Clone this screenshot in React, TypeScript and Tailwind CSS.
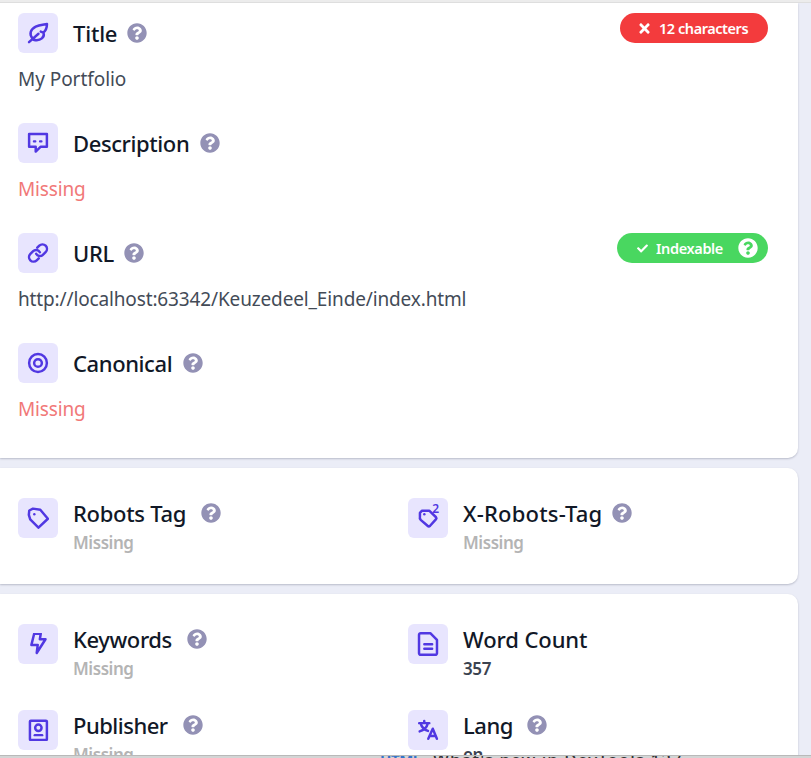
import type { ReactNode } from "react";
import { FaQuestionCircle, FaTimes, FaCheck } from "react-icons/fa";

const paths: Record<string, ReactNode> = {
  leaf: (
    <>
      <path d="M2.200 22 12.500 12.800M6 18C2 13 3.800 8 9.500 5 13 3.300 17.500 3 21.800 2.200 21.800 6 20.500 9.500 17.800 11.500L15 10.500M17.800 11.500C20 16 15 21.500 7 19.300" />
    </>
  ),
  chat: (
    <>
      <path d="M2.300 2.300h19.400v13.700H15l-5.500 5.300v-5.300H2.300z" />
      <path d="M7.500 10.300h1.600M14.200 10.300h1.600" strokeWidth="2.400" />
    </>
  ),
  link: (
    <>
      <path d="M10 12.800a4.600 4.600 0 0 0 7.300 1.200l3-3a4.900 4.900 0 0 0-6.900-7l-2.200 2.200" />
      <path d="M14 11.200a4.600 4.600 0 0 0-7.300-1.200l-3 3a4.900 4.900 0 0 0 6.900 7l2.200-2.200" />
    </>
  ),
  target: (
    <>
      <circle cx="12" cy="12" r="9.700" />
      <circle cx="12" cy="12" r="4.200" />
    </>
  ),
  tag: (
    <>
      <path d="M2 8.500 2.500 3.800 6.500 1.800l8 1.200 8.300 9.800L12.500 22.600 3.500 13.500z" />
      <path d="M8 7.800v0" />
    </>
  ),
  tag2: (
    <>
      <path d="M3.200 10.500V6.500l2.300-2.500h7.800l7.500 7.200a1.500 1.500 0 0 1 0 2l-6.500 7.300a2 2 0 0 1-2.800 0L4 14A4 4 0 0 1 3.200 10.500Z" />
      <path d="M8 8v0" />
    </>
  ),
  bolt: <path d="M7.800 .800h7.200L14 6.800h6.200L10.600 21.800 11.700 13H4.800z" />,
  file: (
    <>
      <path d="M4 2.200h10.500l7.300 7.300v14.500a1.800 1.800 0 0 1-1.800 1.800H4a1.800 1.800 0 0 1-1.800-1.800V4A1.800 1.800 0 0 1 4 2.200Z" />
      <path d="M8 14.200h8.500M8 19.300h8.500" />
    </>
  ),
  badge: (
    <>
      <rect x="3.200" y="1.800" width="18.500" height="21.200" rx="1" />
      <circle cx="12.400" cy="9.600" r="3.500" />
      <path d="M8.500 17.600h8" />
    </>
  ),
  lang: (
    <>
      <path d="M2.400 4.500h11M7.900 2.200v2.300M4 5c1.200 4 4.300 6.800 8 8M11.700 5c-1 4-4.300 7.200-8.800 8.500" />
      <path d="m12.300 21.600 4.900-11 4.500 11M14 18.600h6.200" />
    </>
  ),
};

function Tile({ name }: { name: string }) {
  const tall = name === "file";
  return (
    <div className="relative flex h-10 w-10 shrink-0 items-center justify-center rounded-md bg-[#e8e5fe] text-[#5138e2]">
      <svg
        viewBox={tall ? "0 0 24 28" : "0 0 24 24"}
        className={`${tall ? "h-[26px] w-[22px]" : "h-[22px] w-[22px]"}`}
        fill="none"
        stroke="currentColor"
        strokeWidth="2.700"
        strokeLinecap="round"
        strokeLinejoin="round"
      >
        {paths[name]}
      </svg>
      {name === "tag2" && (
        <span className="absolute top-[5px] right-[9px] text-[12px] leading-[11px] font-semibold">2</span>
      )}
    </div>
  );
}

function Help() {
  return <FaQuestionCircle className="h-5 w-5 shrink-0 text-[#9391b5]" />;
}

type HeadProps = { label: string; width: string; tracking: string; help?: boolean };

function Heading({ label, width, tracking, help = true }: HeadProps) {
  return (
    <div className="flex h-[30px] items-center">
      <h2 className={`${width} ${tracking} text-[22px] leading-[30px] font-medium whitespace-nowrap text-[#111827]`}>
        {label}
      </h2>
      {help && <Help />}
    </div>
  );
}

function Section({ icon, badge, text, missing, textTracking = "", ...head }: HeadProps & {
  icon: string;
  badge?: ReactNode;
  text: string;
  missing?: boolean;
  textTracking?: string;
}) {
  return (
    <section className="h-[110px]">
      <div className="flex h-10 items-start">
        <Tile name={icon} />
        <div className="ml-[15px] pt-[5px]">
          <Heading {...head} />
        </div>
        <div className="ml-auto">{badge}</div>
      </div>
      <p className={`mt-3 text-[19px] leading-7 whitespace-nowrap ${textTracking} ${missing ? "text-[#f17878]" : "text-[#434b57]"}`}>
        {text}
      </p>
    </section>
  );
}

function Item({ icon, value, ...head }: HeadProps & { icon: string; value: string }) {
  const missing = value === "Missing";
  return (
    <div className="flex h-[86px] w-[390px] shrink-0 items-start">
      <Tile name={icon} />
      <div className="ml-[15px]">
        <Heading {...head} />
        <p className={`text-[17px] leading-[29px] font-semibold ${missing ? "tracking-[-0.450px] text-[#b4b4b4]" : "tracking-[-0.400px] text-[#3b4350]"}`}>
          {value}
        </p>
      </div>
    </div>
  );
}

const card = "w-[798px] shrink-0 bg-white shadow-[0_1px_2px_rgba(40,45,70,0.250)] pl-[18px] pr-[30px]";

export default function App() {
  return (
    <div className="flex h-[758px] w-[811px] flex-col overflow-hidden bg-[#ebedf7] font-['Noto_Sans','Open_Sans',sans-serif]">
      <div className="h-[3px] shrink-0 border-b border-[#dedede] bg-[#ececec]" />
      <main className="flex h-[752px] flex-col gap-[10px] overflow-hidden">
        <div className={`${card} h-[455px] rounded-br-[10px] pt-[10px]`}>
          <Section
            icon="leaf" label="Title" width="w-[54px]" tracking="tracking-[-0.200px]"
            text="My Portfolio" textTracking="tracking-[-0.050px]"
            badge={
              <div className="flex h-[30px] w-[148px] items-center rounded-full bg-[#f33b3d] pl-[17px] text-white">
                <FaTimes className="h-[15px] w-[15px]" />
                <span className="ml-[7px] pt-px text-[14.500px] font-semibold tracking-[-0.450px] whitespace-nowrap">12 characters</span>
              </div>
            }
          />
          <Section icon="chat" label="Description" width="w-[127px]" tracking="tracking-[-0.400px]" text="Missing" missing textTracking="tracking-[-0.150px]" />
          <Section
            icon="link" label="URL" width="w-[51px]" tracking="tracking-[-0.300px]"
            text="http://localhost:63342/Keuzedeel_Einde/index.html" textTracking="tracking-[-0.140px]"
            badge={
              <div className="flex h-[30px] w-[151px] items-center rounded-full bg-[#49d760] pl-[20px] text-white">
                <FaCheck className="h-[11px] w-[11px]" />
                <span className="ml-2 w-[82px] pt-px text-[14.500px] font-semibold tracking-[-0.350px]">Indexable</span>
                <FaQuestionCircle className="h-5 w-5 shrink-0" />
              </div>
            }
          />
          <Section icon="target" label="Canonical" width="w-[110px]" tracking="tracking-[-0.400px]" text="Missing" missing textTracking="tracking-[-0.150px]" />
        </div>
        <div className={`${card} flex h-[116px] rounded-r-[10px] pt-[30px]`}>
          <Item icon="tag" label="Robots Tag" width="w-[128px]" tracking="tracking-[-0.300px]" value="Missing" />
          <Item icon="tag2" label="X-Robots-Tag" width="w-[149px]" tracking="tracking-[0.200px]" value="Missing" />
        </div>
        <div className={`${card} h-[220px] rounded-tr-[10px] pt-[30px]`}>
          <div className="flex">
            <Item icon="bolt" label="Keywords" width="w-[114px]" tracking="tracking-[-0.400px]" value="Missing" />
            <Item icon="file" label="Word Count" width="w-[140px]" tracking="tracking-[-0.100px]" value="357" help={false} />
          </div>
          <div className="flex">
            <Item icon="badge" label="Publisher" width="w-[110px]" tracking="tracking-[-0.500px]" value="Missing" />
            <Item icon="lang" label="Lang" width="w-[64px]" tracking="tracking-[-0.450px]" value="en" />
          </div>
        </div>
      </main>
      <div className="flex h-[3px] shrink-0 items-start overflow-hidden border-t border-[#b9b9b9] bg-[#d3d5d5] pl-[380px]">
        <div className="-mt-[5px] flex text-[17px] leading-[17px] whitespace-nowrap">
          <span className="w-[53px] text-[15px] font-bold tracking-[-0.500px] text-[#3473c8]">HTML</span>
          <span className="font-medium tracking-[1px] text-[#333]">What's new in DevTools 127</span>
        </div>
      </div>
    </div>
  );
}
